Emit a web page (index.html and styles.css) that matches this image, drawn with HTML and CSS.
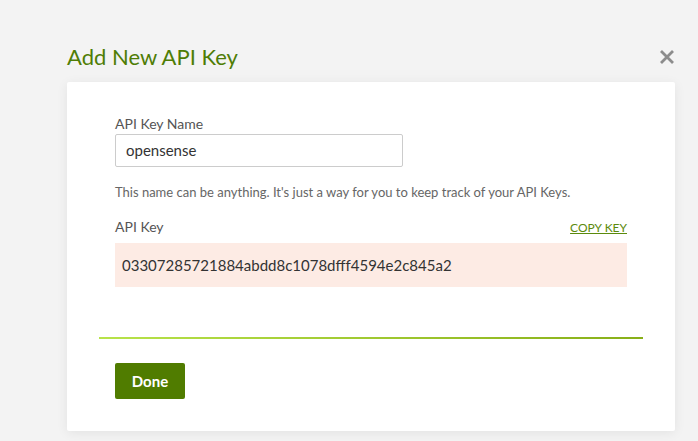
FILE: index.html
```html
<!DOCTYPE html>
<html>
<head>
<meta charset="utf-8">
<link rel="stylesheet" href="styles.css">
</head>
<body>
<div class="modal">
  <div class="modal-head">
    <h1 class="title">Add New API Key</h1>
    <svg class="close" width="16" height="16" viewBox="0 0 16 16"><path d="M2 2 L14 14 M14 2 L2 14" stroke="#8c8c8c" stroke-width="2.8" stroke-linecap="butt"/></svg>
  </div>
  <div class="card">
    <div class="body">
      <label class="label">API Key Name</label>
      <div class="input">opensense</div>
      <p class="help">This name can be anything. It's just a way for you to keep track of your API Keys.</p>
      <div class="key-row">
        <span class="label">API Key</span>
        <a class="copy">COPY KEY</a>
      </div>
      <div class="key">03307285721884abdd8c1078dfff4594e2c845a2</div>
    </div>
    <div class="rule"></div>
    <div class="foot">
      <button class="done">Done</button>
    </div>
  </div>
</div>
</body>
</html>
```
FILE: styles.css
```css
html, body { margin: 0; padding: 0; }
body {
  background: #f3f3f3;
  font-family: Lato, "Open Sans", sans-serif;
  width: 698px;
  height: 441px;
  overflow: hidden;
}
.modal {
  width: 608px;
  margin-left: 67px;
  padding-top: 42px;
}
.modal-head {
  display: flex;
  justify-content: space-between;
  align-items: center;
  height: 30px;
  margin-bottom: 10px;
}
.title {
  margin: 0;
  font-size: 22px;
  font-weight: 400;
  color: #4f7d05;
  line-height: 30px;
}
.card {
  background: #fff;
  border-radius: 2px;
  box-shadow: 0 2px 12px rgba(0,0,0,0.07);
  height: 349px;
  box-sizing: border-box;
  padding-top: 33px;
}
.body { padding: 0 48px; }
.label {
  display: block;
  font-size: 14px;
  color: #555;
  line-height: 18px;
}
.input {
  margin-top: 1px;
  width: 288px;
  height: 33px;
  box-sizing: border-box;
  border: 1px solid #ccc;
  border-radius: 2px;
  padding: 0 10px;
  font-size: 15px;
  line-height: 31px;
  color: #333;
}
.help {
  margin: 17px 0 0;
  font-size: 13px;
  color: #666;
  line-height: 16px;
}
.key-row {
  display: flex;
  justify-content: space-between;
  align-items: baseline;
  margin-top: 18px;
}
.copy {
  font-size: 12px;
  color: #5b8a0c;
  text-decoration: underline;
  line-height: 18px;
}
.key {
  margin-top: 6px;
  height: 44px;
  background: #fdebe4;
  padding: 0 7px;
  font-size: 15px;
  line-height: 44px;
  color: #333;
}
.rule {
  margin: 50px 32px 0;
  height: 2px;
  background: linear-gradient(to right, #b8e34a, #88af18);
}
.foot { padding: 24px 48px 0; }
.done {
  width: 70px;
  height: 36px;
  border: 0;
  border-radius: 2px;
  background: #507c00;
  color: #fff;
  font-family: Lato, sans-serif;
  font-weight: 700;
  font-size: 15px;
  padding: 0;
}
```
